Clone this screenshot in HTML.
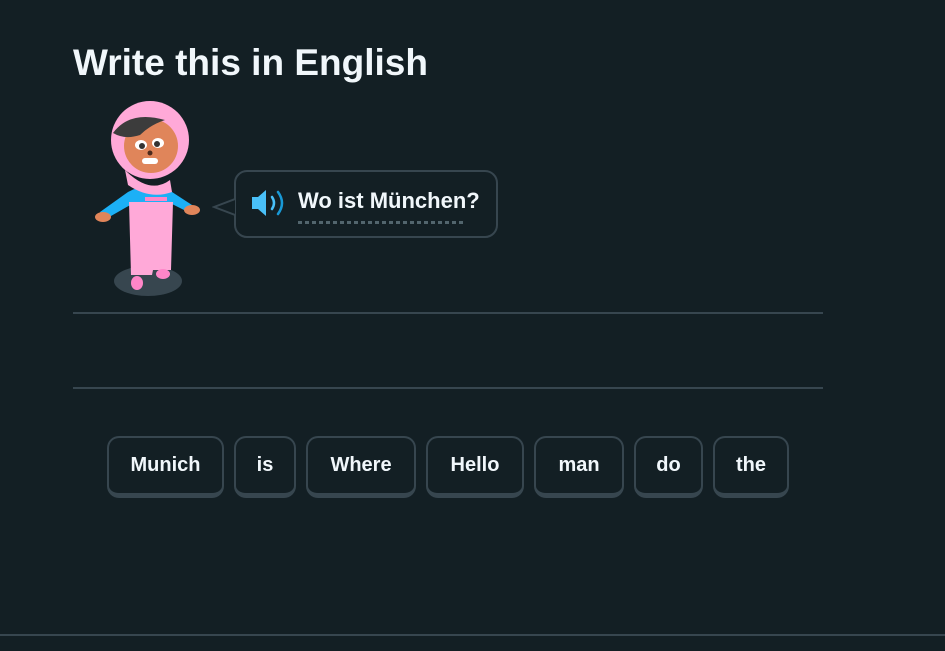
<!DOCTYPE html>
<html><head><style>
body{margin:0;width:945px;height:651px;background:#131f24;font-family:"Liberation Sans",sans-serif;position:relative;overflow:hidden;color:#f1f7fb}
h1{position:absolute;left:73px;top:42px;margin:0;font-size:37px;font-weight:bold;letter-spacing:0px}
.line{position:absolute;left:73px;width:750px;height:2px;background:#37464f}
.btn{position:absolute;top:436px;height:62px;box-sizing:border-box;border:2px solid #37464f;border-bottom-width:5px;border-radius:12px;font-size:20px;font-weight:bold;display:flex;align-items:center;justify-content:center;color:#f1f7fb}
.bubble{position:absolute;left:234px;top:170px;width:264px;height:68px;box-sizing:border-box;border:2px solid #37464f;border-radius:13px}
</style></head><body>
<h1>Write this in English</h1>
<svg style="position:absolute;left:0;top:0" width="945" height="651">
<ellipse cx="148" cy="281" rx="34" ry="15" fill="#37464f"/>
<path d="M128 192 L100 212 L104 220 L132 204 Z" fill="#1cb0f6"/>
<path d="M172 192 L192 205 L188 212 L168 202 Z" fill="#1cb0f6"/>
<ellipse cx="103" cy="217" rx="8" ry="5" fill="#e0855a"/>
<ellipse cx="192" cy="210" rx="8" ry="5" fill="#e0855a"/>
<path d="M128 192 Q150 180 172 192 L174 204 L127 204 Z" fill="#1cb0f6"/>
<rect x="145" y="197" width="22" height="4" fill="#ff86c8"/>
<path d="M129 202 H173 L171 270 H153 L152 275 H131 Z" fill="#ffa9d8"/>
<ellipse cx="137" cy="283" rx="6" ry="7" fill="#ff86c8"/>
<ellipse cx="163" cy="274" rx="7" ry="5" fill="#ff86c8"/>
<circle cx="150" cy="140" r="39" fill="#ffa9d8"/>
<path d="M125 170 Q150 195 170 180 L172 192 Q150 200 128 185 Z" fill="#ffa9d8"/>
<circle cx="151" cy="146" r="27" fill="#e0855a"/>
<path d="M113 133 Q130 110 165 120 Q150 125 140 135 Q125 140 113 133 Z" fill="#3c3c3c"/>
<ellipse cx="141" cy="145" rx="6" ry="5" fill="#fff"/><circle cx="142" cy="146" r="3" fill="#333"/>
<ellipse cx="158" cy="143" rx="6" ry="5" fill="#fff"/><circle cx="157" cy="144" r="3" fill="#333"/>
<circle cx="150" cy="153" r="2.5" fill="#4b2a1d"/>
<rect x="142" y="158" width="16" height="6" rx="3" fill="#fff"/>
</svg>
<div class="bubble"></div>
<svg style="position:absolute;left:212px;top:190px" width="26" height="36"><path d="M23 1 L23 9 L2 17 L23 25 L23 35" fill="#131f24" stroke="#37464f" stroke-width="2"/><rect x="24" y="0" width="2" height="36" fill="#131f24"/></svg>
<svg style="position:absolute;left:250px;top:187px" width="40" height="32"><path d="M2 10 H8 L16 3 V29 L8 22 H2 Z" fill="#49c0f8"/><path d="M22 10 Q26 16 22 22" stroke="#49c0f8" stroke-width="2.5" fill="none" stroke-linecap="round"/><path d="M28 5 Q36 16 28 27" stroke="#1899d6" stroke-width="2.5" fill="none" stroke-linecap="round"/></svg>
<div style="position:absolute;left:298px;top:188px;font-size:22px;font-weight:bold">Wo ist München?</div>
<div style="position:absolute;left:298px;top:221px;width:166px;height:3px;background:repeating-linear-gradient(90deg,#52656d 0 4px,transparent 4px 7px)"></div>
<div class="line" style="top:312px"></div>
<div class="line" style="top:387px"></div>
<div class="btn" style="left:107px;width:117px">Munich</div>
<div class="btn" style="left:234px;width:62px">is</div>
<div class="btn" style="left:306px;width:110px">Where</div>
<div class="btn" style="left:426px;width:98px">Hello</div>
<div class="btn" style="left:534px;width:90px">man</div>
<div class="btn" style="left:634px;width:69px">do</div>
<div class="btn" style="left:713px;width:76px">the</div>
<div style="position:absolute;left:0;top:634px;width:945px;height:2px;background:#37464f"></div>
</body></html>
